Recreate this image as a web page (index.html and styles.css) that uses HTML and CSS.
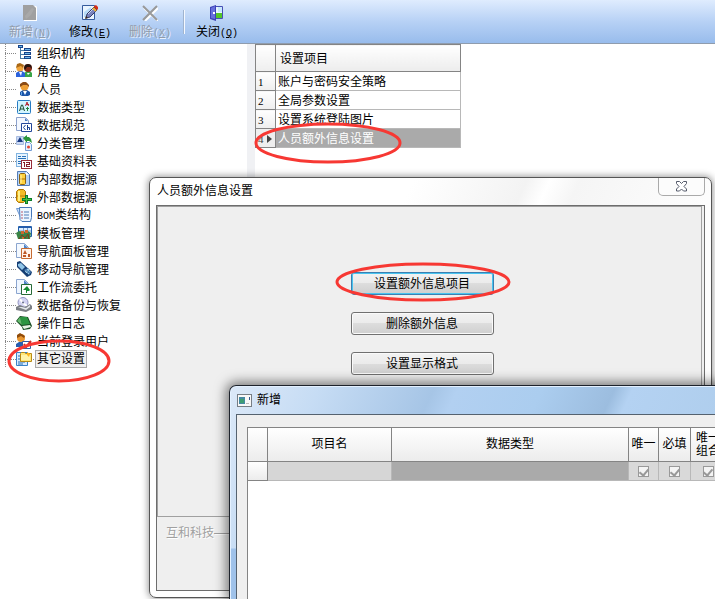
FILE: index.html
```
<!DOCTYPE html>
<html lang="zh-CN">
<head>
  <meta charset="UTF-8" />
  <meta name="viewport" content="width=device-width, initial-scale=1.0"/>
  <title>其它设置</title>
  <link rel="stylesheet" href="styles.css">
</head>
<body>

  <header class="toolbar">
    <button class="tool" disabled>
      <svg width="16" height="16" viewBox="0 0 16 16"><path d="M2 1h12l1 1v14H2z" fill="#fff"/><path d="M1 0h10l3 3v12H1z" fill="#a0a0a0"/><path d="M3 11l7-8 2 1-3 6-5 4z" fill="#a9a9a9"/></svg>
      <span>新增<kbd>(<u>N</u>)</kbd></span>
    </button>
    <button class="tool">
      <svg width="16" height="16" viewBox="0 0 16 16"><path d="M.5.5h12v14H.5z" fill="#eaf5ff" stroke="#355b9d"/><path d="M2 7l7-5v10H2z" fill="#b9dcf8"/><path d="M4 13l1-4 7-7 3 3-7 7z" fill="#7a83bd" stroke="#343a68"/><path d="M6 9l6-6" stroke="#d1d8f2"/><path d="M11 3l3 3" stroke="#f1b22e" stroke-width="2"/><path d="M12 1l2-1 2 2v2l-1 1-3-3z" fill="#d52e18"/><path d="M3 14l1-3 2 2z" fill="#3b291c"/></svg>
      <span>修改<kbd>(<u>E</u>)</kbd></span>
    </button>
    <button class="tool" disabled>
      <svg width="16" height="16" viewBox="0 0 16 16" fill="none"><path d="M2 3l14 13M16 3L3 16" stroke="#fff" stroke-width="2"/><path d="M1 1l14 14M15 1L1 15" stroke="#999" stroke-width="2"/></svg>
      <span>删除<kbd>(<u>X</u>)</kbd></span>
    </button>
    <span class="separator"></span>
    <button class="tool">
      <svg width="16" height="16" viewBox="0 0 16 16"><path d="M5.500 1.500h8v12h-8z" fill="#e8f6ff" stroke="#4650b5"/><path d="M7 8h6v5H7z" fill="#54c529"/><path d="M9 2h4v5H9z" fill="#c8e8fc"/><path d="M1 2l6-2v16l-6-2z" fill="#3c42b7"/><path d="M2 3l4-2v13l-4-1z" fill="#6670dc"/><path d="M4 7h2v2H4z" fill="#fff"/></svg>
      <span>关闭<kbd>(<u>Q</u>)</kbd></span>
    </button>
  </header>

  <main class="workspace">
    <ul class="tree">
      <li>
        <svg width="16" height="16" viewBox="0 0 16 16" shape-rendering="crispEdges"><path d="M4.500 3v10.500H8M5 5.500h3M5 9.500h3" fill="none" stroke="#4778a4"/><path d="M2 0h5v3H2zM8 3h7v3H8zM8 7h7v3H8zM8 11h7v3H8z" fill="#17448b"/><path d="M3 1h3v1H3zM9 4h5v1H9zM9 8h5v1H9zM9 12h5v1H9z" fill="#6fb7e7"/></svg>
        <a href="#">组织机构</a>
      </li>
      <li>
        <svg width="16" height="16" viewBox="0 0 16 16"><path d="M8 14v-4l3-2h3l2 2v4z" fill="#39a447"/><circle cx="12" cy="5" r="4" fill="#8b2f18"/><path d="M8 5l1-3 3-1 3 1 1 4-2-2-3 0-2 3z" fill="#211410"/><path d="M0 14v-4l3-2h3l3 2v4z" fill="#2c62dc"/><path d="M3 9l2 4 1-4z" fill="#f7f7ff"/><circle cx="4" cy="5" r="3.600" fill="#f0a53c"/><path d="M0 5l1-4 3-1 4 2-1 3-2-2-3 1z" fill="#a96816"/><path d="M11 10l1 2 2-2z" fill="#fff"/></svg>
        <a href="#">角色</a>
      </li>
      <li>
        <svg width="16" height="16" viewBox="0 0 16 16"><path d="M4 14v-3l3-2h4l3 2v3l-2 1H6z" fill="#1b55a8"/><path d="M7 10l2 4 2-4z" fill="#fff"/><circle cx="8.500" cy="5.500" r="4" fill="#ee9f35"/><path d="M4 6V3l3-2h3l3 3v2l-2-2H7z" fill="#8b4b16"/><path d="M5 11h1v3H5z" fill="#60a4e4"/></svg>
        <a href="#">人员</a>
      </li>
      <li>
        <svg width="16" height="16" viewBox="0 0 16 16"><rect x="1.500" y="1.500" width="13" height="13" rx="1" fill="#d3f5ff" stroke="#287cc4"/><path d="M3.500 12l2-6h1l2 6M4 10h4" fill="none" stroke="#1d4f30"/><path d="M9.500 7l1.500-4 1.500 4M10 5.500h3" fill="none" stroke="#b52c39"/><path d="M11.500 8v4M10 9.500h3" stroke="#24823c"/></svg>
        <a href="#">数据类型</a>
      </li>
      <li>
        <svg width="16" height="16" viewBox="0 0 16 16"><path d="M.5.5h9l3 3v10H.5z" fill="#f4f8ff" stroke="#8da2cc"/><path d="M9 1v3h3z" fill="#4f7fc4"/><path d="M5.500 6.500h10v8h-10z" fill="#fff" stroke="#23479b"/><path d="M9.500 8l-2 2.500 2 2.500M11.500 8v5M12 10.500h1.500V13" fill="none" stroke="#163f91"/></svg>
        <a href="#">数据规范</a>
      </li>
      <li>
        <svg width="16" height="16" viewBox="0 0 16 16"><path d="M.5 1.500h7v8h-7z" fill="#cbd9f4" stroke="#a8bce0"/><path d="M4 2l3 5H1z" fill="#173982"/><path d="M7 3l4-3v2h2l2 2 1 4-3-2h-2v2z" fill="#2b953b"/><path d="M9.500 7.500h4l2 2v6h-6z" fill="#e8f2ff" stroke="#739bd4"/><circle cx="12.500" cy="12" r="1.500" fill="#e34635"/></svg>
        <a href="#">分类管理</a>
      </li>
      <li>
        <svg width="16" height="16" viewBox="0 0 16 16" shape-rendering="crispEdges"><path d="M.5.5h11v13H.5z" fill="#e7f4ff" stroke="#82b4e0"/><path d="M2 3h3v1H2zM6 3h4v1H6zM2 5h8v1H2zM2 8h3v1H2zM2 10h3v1H2z" fill="#2972ba"/><path d="M5.500 7.500h10v8h-10z" fill="#fff" stroke="#982b39"/><path d="M7 9.500h1.500V14M10 9.500h3.500v2h-3v2H14" fill="none" stroke="#861d2c"/></svg>
        <a href="#">基础资料表</a>
      </li>
      <li>
        <svg width="16" height="16" viewBox="0 0 16 16"><path d="M1.500.5h9l3 3v11h-12z" fill="#b8d5f7" stroke="#547db8"/><path d="M10 1v3h3z" fill="#fff"/><path d="M3.500 3.500l1-1h4l1 1v9l-1 1h-4l-1-1z" fill="#ffd23e" stroke="#8d6411"/><path d="M4 8h5" stroke="#b1730c"/><path d="M5 4v8" stroke="#fff4ae"/></svg>
        <a href="#">内部数据源</a>
      </li>
      <li>
        <svg width="16" height="16" viewBox="0 0 16 16"><path d="M.5 2.500l2-2h5l2 2v9l-2 2h-5l-2-2z" fill="#f3bd27" stroke="#ad7507"/><path d="M1 7h8" stroke="#b57b0d"/><path d="M3 2v10" stroke="#fff18d" stroke-width="2"/><path d="M9 6h3v3h4v3h-4v3H9v-3H6V9h3z" fill="#087c29"/><path d="M10 7h1v3h4v1h-4v3h-1v-3H7v-1h3z" fill="#46c442"/></svg>
        <a href="#">外部数据源</a>
      </li>
      <li>
        <svg width="16" height="16" viewBox="0 0 16 16"><path d="M.5 1.500h10v8l-5 3z" fill="#c6defa" stroke="#7199d2"/><path d="M3.500.5h12v10l-1 4H6l-2-2z" fill="#edf6ff" stroke="#4778b9"/><path d="M8 5h5M8 8h5M8 11h5" stroke="#4e7cb7"/><path d="M5 5h2M5 8h2M5 11h2" stroke="#b35a70"/></svg>
        <a href="#"><kbd>BOM</kbd>类结构</a>
      </li>
      <li>
        <svg width="16" height="16" viewBox="0 0 16 16"><path d="M2.500 1.500h13v10h-13z" fill="#dceeff" stroke="#1f5fab"/><path d="M3 1h12v2H3z" fill="#235cac"/><path d="M3 6h12M7.500 3v8M11.500 3v8" stroke="#7a9fd1"/><path d="M0 8l3-2 4 1 5-1 3 2-1 6H2z" fill="#398345"/><path d="M3 14l3-4 3 3 3-4 1 5" fill="none" stroke="#7d3d18"/><path d="M5 6h3v3H5zM9 5h3v3H9zM6 12h2v2H6z" fill="#cc672e"/></svg>
        <a href="#">模板管理</a>
      </li>
      <li>
        <svg width="16" height="16" viewBox="0 0 16 16"><path d="M.5.5h8l4 4v10H.5z" fill="#f4f9ff" stroke="#8ba5cf"/><path d="M8 1v4h4z" fill="#4d83c9"/><path d="M5.500 5.500h10v10h-10z" fill="#fff4eb" stroke="#c66b32"/><path d="M9 7l2 4H7zM12 11h2v3h-2zM7 12h3v2H7z" fill="#bd5828"/></svg>
        <a href="#">导航面板管理</a>
      </li>
      <li>
        <svg width="16" height="16" viewBox="0 0 16 16"><path d="M1 1l3-1 12 11-1 3-4 2L1 6V3z" fill="#153e74"/><path d="M2 3l3-1 4 4-3 3-4-4z" fill="#91c5e8"/><path d="M8 9l4-2 3 4-2 3z" fill="#4a7fb5"/><path d="M9 10l4 3M11 8l3 3M10 12l3-4" stroke="#bce8f5" stroke-dasharray="1 1"/></svg>
        <a href="#">移动导航管理</a>
      </li>
      <li>
        <svg width="16" height="16" viewBox="0 0 16 16"><path d="M.5.5h8l4 4v10H.5z" fill="#eff6ff" stroke="#8ba5cf"/><path d="M8 1v4h4z" fill="#4d83c9"/><path d="M5.500 5.500h10v10h-10z" fill="#fff" stroke="#286b38"/><path d="M10 14v-3H7l4-4 3 4-1 1h-2v2z" fill="#158b33"/></svg>
        <a href="#">工作流委托</a>
      </li>
      <li>
        <svg width="16" height="16" viewBox="0 0 16 16"><circle cx="7" cy="5.500" r="5" fill="#d4d4f4" stroke="#9092c0"/><path d="M4 2l3 4 4 3" stroke="#fff" stroke-width="2"/><circle cx="7" cy="5.500" r="1" fill="#646b8a"/><path d="M0 10l4-2 5 2 5-3 2 2v3l-6 3-10-2z" fill="#7b7f85"/><path d="M2 10l4 0 4 1 4-3v2l-4 3z" fill="#e3e6ea"/></svg>
        <a href="#">数据备份与恢复</a>
      </li>
      <li>
        <svg width="16" height="16" viewBox="0 0 16 16"><path d="M0 6l4-5 8 1 4 9-2 3-7 1-1-3z" fill="#184d23"/><path d="M4 2h7l3 7-8 1z" fill="#2c9541"/><path d="M6 11l8-1 1 2-7 2z" fill="#e7f3e5"/><path d="M4 2l2 8-5-4z" fill="#63b96c"/></svg>
        <a href="#">操作日志</a>
      </li>
      <li>
        <svg width="16" height="16" viewBox="0 0 16 16"><path d="M0 14v-3l3-2h5l2 2v3z" fill="#275eb0"/><circle cx="5" cy="5" r="4" fill="#e99731"/><path d="M1 5l0-3 3-2 5 3-1 2-3-2z" fill="#8e4b0b"/><path d="M6.500 8.500h8v7h-8z" fill="#fff" stroke="#3158a4"/><path d="M8 11l2 3 5-6" fill="none" stroke="#ca3228" stroke-width="2"/></svg>
        <a href="#">当前登录用户</a>
      </li>
      <li>
        <svg width="16" height="16" viewBox="0 0 16 16"><path d="M.5 1.500h11v13H.5z" fill="#d7ebff" stroke="#3a82c8"/><path d="M2 5h3M2 8h3M2 11h7M2 13h5" stroke="#286fb3"/><path d="M4.500 2.500l1-1h3l1 1h6v8h-11z" fill="#ffe77a" stroke="#b98b16"/><path d="M5 4h9v5H5z" fill="#fff4aa"/><path d="M11 1l3 2-1 3-2-2z" fill="#ffb51e"/></svg>
        <a href="#" class="selected">其它设置</a>
      </li>
    </ul>

    <div class="splitter"></div>

    <table class="settings-grid">
      <thead>
        <tr><th class="row-no"></th><th>设置项目</th></tr>
      </thead>
      <tbody>
        <tr><td class="row-no">1</td><td>账户与密码安全策略</td></tr>
        <tr><td class="row-no">2</td><td>全局参数设置</td></tr>
        <tr><td class="row-no">3</td><td>设置系统登陆图片</td></tr>
        <tr class="current"><td class="row-no">4<i class="pointer"></i></td><td>人员额外信息设置</td></tr>
      </tbody>
    </table>
  </main>

  <section class="window extra-window" aria-label="人员额外信息设置">
    <div class="extra-title">
      <h2>人员额外信息设置</h2>
      <button class="close" aria-label="关闭">
        <svg width="13" height="11" viewBox="0 0 13 11"><path d="M1.500.5h3l2 2 2-2h3v2l-2.500 3L11.500 8v2h-3l-2-2-2 2h-3V8L4 5.500l-2.500-3z" fill="#fff" stroke="#555b6b"/></svg>
      </button>
    </div>
    <div class="extra-client">
      <div class="extra-panel">
        <button class="btn focused">设置额外信息项目</button>
        <button class="btn">删除额外信息</button>
        <button class="btn">设置显示格式</button>
      </div>
      <div class="company">互和科技——</div>
    </div>
  </section>

  <section class="window add-window" aria-label="新增">
    <div class="add-title">
      <svg width="15" height="13" viewBox="0 0 15 13" shape-rendering="crispEdges"><path d="M.5.5h14v12H.5z" fill="#f8f8f8" stroke="#777e85"/><path d="M2 3h6v7H2z" fill="#4589a1"/><path d="M3 5h4v4H3z" fill="#3e9d72"/><path d="M12 3h1v3h-1z" fill="#34598c"/><path d="M9 9h3v1H9z" fill="#bbb"/></svg>
      <h2>新增</h2>
    </div>
    <div class="add-client">
      <div class="add-sheet">
        <table class="fields-grid">
          <colgroup><col class="c-mark"><col class="c-name"><col class="c-type"><col class="c-only"><col class="c-must"><col class="c-group"></colgroup>
          <thead>
            <tr><th></th><th>项目名</th><th>数据类型</th><th>唯一</th><th>必填</th><th>唯一<br>组合</th></tr>
          </thead>
          <tbody>
            <tr>
              <td class="mark"></td>
              <td class="name"></td>
              <td class="type"></td>
              <td><input type="checkbox" aria-label="唯一" checked disabled></td>
              <td><input type="checkbox" aria-label="必填" checked disabled></td>
              <td><input type="checkbox" aria-label="唯一组合" checked disabled></td>
            </tr>
          </tbody>
        </table>
      </div>
    </div>
  </section>

  <!-- red marker rings -->
  <svg class="rings" width="520" height="390" viewBox="0 0 520 390">
    <ellipse cx="328" cy="143" rx="72" ry="19"/>
    <ellipse cx="423" cy="282" rx="86" ry="18"/>
    <ellipse cx="59" cy="361" rx="50" ry="20"/>
  </svg>

</body>
</html>
```
FILE: styles.css
```
:root {
  --face: #efefef;
  --line: #848484;
  --grid: #b8b8b8;
  --ring: #f73833;
}

* {
  box-sizing: border-box;
}

body {
  margin: 0;
  height: 100vh;
  overflow: hidden;
  position: relative;
  display: flex;
  flex-direction: column;
  background: #fff;
  color: #000;
  font-family: "Liberation Sans", "Noto Sans CJK SC", sans-serif;
  font-size: 12px;
  line-height: 16px;
}

button, input {
  font: inherit;
  color: inherit;
}

h2 {
  margin: 0;
  font-size: 12px;
  font-weight: normal;
}

kbd {
  font-family: "Liberation Mono", monospace;
  font-size: 10px;
}

svg {
  display: block;
  flex: none;
}

/* toolbar */
.toolbar {
  display: flex;
  height: 44px;
  flex: none;
  background: linear-gradient(#dfecfe, #b7d1f5 50%, #98bcec);
  border-bottom: 1px solid #8f9cad;
}

.tool {
  width: 60px;
  padding: 5px 0 0;
  border: none;
  background: none;
  display: flex;
  flex-direction: column;
  align-items: center;
  gap: 3px;
  white-space: nowrap;
}

.tool:disabled {
  color: #929baa;
  text-shadow: 1px 1px 0 #e8f1fd;
}

.separator {
  width: 2px;
  height: 24px;
  margin: 10px 2px 0 3px;
  background: #a0b4cf;
  border-right: 1px solid #f5f9ff;
}

.workspace {
  flex: 1;
  min-height: 0;
  display: flex;
  align-items: flex-start;
}

/* tree */
.tree {
  list-style: none;
  margin: 0;
  padding: 0 0 0 5px;
  width: 247px;
}

.tree li {
  display: flex;
  align-items: center;
  height: 18px;
  background:
    linear-gradient(90deg, #888 50%, transparent 50%) 0 9px / 2px 1px repeat-x,
    linear-gradient(#888 50%, transparent 50%) 0 0 / 1px 2px repeat-y;
}

/* nothing to the right of the boxed item */
.tree li:last-child::after {
  content: "";
  flex: 1;
  height: 18px;
  background: #fff;
}

.tree svg {
  margin-left: 11px;
  background: #fff;
}

.tree a {
  flex: 1;
  padding: 1px 0 0 5px;
  color: #000;
  text-decoration: none;
  background: #fff;
}

.tree a.selected {
  flex: none;
  margin-left: 3px;
  padding: 0 1px;
  background: #f0f0f0;
  border: 1px solid #aaa;
}

.splitter {
  width: 8px;
  align-self: stretch;
  background: #f0f1f4;
}

/* left settings grid */
.settings-grid {
  width: 206px;
  table-layout: fixed;
  border-collapse: collapse;
  border: 1px solid var(--line);
}

.settings-grid th, .settings-grid td {
  height: 19px;
  padding: 1px 0 0 2px;
  border: 1px solid var(--grid);
  text-align: left;
  font-weight: normal;
}

.settings-grid th {
  height: 27px;
  padding-left: 4px;
  background: linear-gradient(#fff, #ececec);
  border-color: var(--line);
}

.settings-grid .row-no {
  width: 20px;
  padding-left: 2px;
  background: linear-gradient(#fff, #eee);
  border-color: var(--line);
  font-family: "Liberation Serif", serif;
  font-size: 11px;
}

.settings-grid .current td {
  background: #aaa;
  color: #fff;
}

.settings-grid .current .row-no {
  background: #eee;
  color: #444;
}

.pointer {
  display: inline-block;
  margin-left: 3px;
  border: 4px solid transparent;
  border-left: 5px solid #444;
  border-right: 0;
}

/* windows */
.window {
  position: absolute;
  display: flex;
  flex-direction: column;
}

.extra-window {
  left: 149px;
  top: 177px;
  right: 3px;
  bottom: 1px;
  padding: 0 6px 6px;
  border: 1px solid #555;
  border-radius: 7px;
  background: linear-gradient(115deg, #fff 35%, #f3f3f3 50%, #fff 53%, #f5f5f5 57%, #fdfdfd 75%);
  box-shadow: 0 0 7px 1px rgba(0, 0, 0, 0.4);
}

.extra-title {
  display: flex;
  justify-content: space-between;
  height: 27px;
  padding-left: 1px;
  flex: none;
}

.extra-title h2 {
  padding-top: 5px;
}

.close {
  width: 47px;
  height: 18px;
  padding: 0;
  display: flex;
  align-items: center;
  justify-content: center;
  border: 1px solid #aaa;
  border-top: 0;
  border-radius: 0 0 5px 5px;
  background: #fcfcfc;
}

.extra-client {
  flex: 1;
  display: flex;
  flex-direction: column;
  border: 1px solid #6d6d6d;
  background: var(--face);
}

.extra-panel {
  flex: 1;
  margin-right: 2px;
  padding: 65px 15px 0 0;
  display: flex;
  flex-direction: column;
  align-items: center;
  gap: 17px;
  border: 1px solid #a0a0a0;
}

.btn {
  width: 143px;
  height: 23px;
  padding: 0;
  border: 1px solid #707070;
  border-radius: 3px;
  background: linear-gradient(#f2f2f2, #ebebeb 50%, #ddd 50%, #cfcfcf);
  box-shadow: inset 0 0 0 1px #fafafa;
}

.btn.focused {
  border-color: #3c7fb1;
  box-shadow: inset 0 0 0 1px #48c4f0;
}

.company {
  height: 73px;
  padding: 8px 0 0 9px;
  color: #a0a0a0;
  text-shadow: 1px 1px 0 #fff;
}

/* runs off the right and bottom of the screen */
.add-window {
  left: 229px;
  top: 385px;
  right: -20px;
  bottom: 0;
  padding: 0 6px;
  border: 1px solid #1d222b;
  border-bottom: 0;
  border-radius: 7px 7px 0 0;
  background:
    linear-gradient(transparent 162px, #9fc2ea 163px) 0 0 / 6px 100% no-repeat,
    linear-gradient(115deg, #dce9f8, #c6dcf4 15%, #a6c5e6 34%, #b2d0f1 38%, #abcdef 52%, #9cbddf 64%, #b4d2f2 67%, #aecdec 87%, #8faecf);
  box-shadow: inset 0 1px 0 #e4f1ff, inset 1px 0 0 #e4f1ff, 0 0 12px 3px rgba(0, 0, 0, 0.5);
}

.add-title {
  display: flex;
  align-items: center;
  gap: 5px;
  height: 28px;
  padding-left: 1px;
  flex: none;
}

.add-client {
  flex: 1;
  padding: 12px 0 0 10px;
  border: 1px solid #55626f;
  border-bottom: 0;
  background: var(--face);
}

.add-sheet {
  height: 100%;
  border: 1px solid var(--line);
  border-bottom: 0;
  background: #fff;
}

.fields-grid {
  width: 100%;
  table-layout: fixed;
  border-collapse: separate;
  border-spacing: 0;
}

.c-mark { width: 20px; }
.c-name { width: 124px; }
.c-only { width: 30px; }
.c-must { width: 32px; }
.c-group { width: 35px; }

.fields-grid th {
  height: 34px;
  padding: 0;
  border-right: 1px solid var(--line);
  border-bottom: 1px solid var(--line);
  background: linear-gradient(#fff, #ececec);
  font-weight: normal;
  line-height: 13px;
  white-space: nowrap;
}

.fields-grid td {
  height: 19px;
  padding: 0;
  border-right: 1px solid var(--grid);
  border-bottom: 1px solid var(--grid);
  background: #d9d9d9;
  text-align: center;
}

.fields-grid .mark {
  border-color: var(--line);
  background: linear-gradient(#fff, #ececec);
}

.fields-grid .name {
  background: #d6d6d6;
}

.fields-grid .type {
  background: #aaa;
}

.fields-grid input {
  appearance: none;
  display: block;
  width: 11px;
  height: 11px;
  margin: 0 auto;
  border: 1px solid #999;
  background: #f4f4f4;
}

.fields-grid input::before {
  content: "";
  display: block;
  width: 4px;
  height: 7px;
  margin: 0 auto;
  border: solid #999;
  border-width: 0 2px 2px 0;
  transform: rotate(40deg);
}

.rings {
  position: absolute;
  left: 0;
  top: 0;
  pointer-events: none;
  fill: none;
  stroke: var(--ring);
  stroke-width: 3px;
}
```
